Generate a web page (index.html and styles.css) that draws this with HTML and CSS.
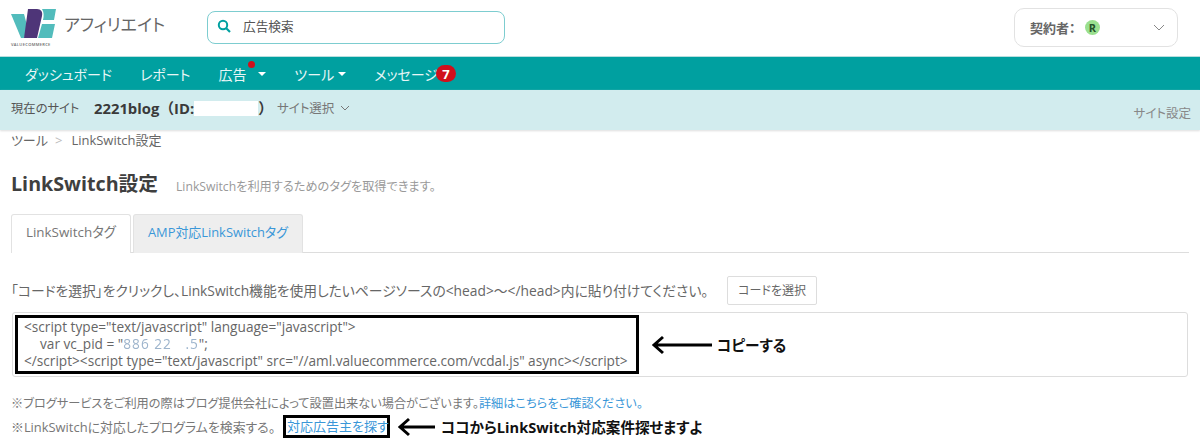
FILE: index.html
```html
<!DOCTYPE html>
<html lang="ja">
<head>
<meta charset="utf-8">
<title>LinkSwitch設定</title>
<link rel="stylesheet" href="styles.css">
</head>
<body>
<header class="top">
  <div class="logo">
    <div class="logo-mark">
      <svg class="logo-svg" width="45" height="30" viewBox="0 0 45 30">
        <path d="M0 5H13L17 20 13 29H10Z" fill="#52bcbc"/>
        <path d="M17 0H26C30 0 32 3 31 7L26 29H13Z" fill="#4e3578"/>
        <path d="M31 0H45L43 11H32C33 7 33 3 31 0ZM31 15H44L41 29H27Z" fill="#52bcbc"/>
      </svg>
      <span class="logo-word">VALUECOMMERCE</span>
    </div>
    <span class="logo-text">アフィリエイト</span>
  </div>
  <div class="search">
    <svg width="14" height="14" viewBox="0 0 14 14"><circle cx="6" cy="6" r="4.2" fill="none" stroke="#00a0a0" stroke-width="2"/><path d="M9 9l4 4" stroke="#00a0a0" stroke-width="2.2"/></svg>
    <span>広告検索</span>
  </div>
  <div class="account">
    <span class="acc-label">契約者：</span><span class="acc-badge">R</span>
    <svg class="acc-chev" width="12" height="7" viewBox="0 0 12 7"><path d="M1 1l5 5 5-5" fill="none" stroke="#888" stroke-width="1"/></svg>
  </div>
</header>
<nav class="nav">
  <a class="nav-item">ダッシュボード</a>
  <a class="nav-item">レポート</a>
  <a class="nav-item has-dot">広告<i class="dot"></i><i class="caret"></i></a>
  <a class="nav-item">ツール<i class="caret"></i></a>
  <a class="nav-item">メッセージ<b class="count">7</b></a>
</nav>
<div class="sitebar">
  <div class="site-left">
    <span class="site-label">現在のサイト</span>
    <strong class="site-name">2221blog（ID:<span class="mask"></span>）</strong>
    <span class="site-select">サイト選択</span>
    <svg width="10" height="6" viewBox="0 0 10 6"><path d="M1 1l4 4 4-4" fill="none" stroke="#777" stroke-width="1"/></svg>
  </div>
  <span class="site-config">サイト設定</span>
</div>
<main class="main">
  <div class="crumbs"><span>ツール</span><span class="sep">&gt;</span><span>LinkSwitch設定</span></div>
  <div class="title-row">
    <h1>LinkSwitch設定</h1>
    <span class="lead">LinkSwitchを利用するためのタグを取得できます。</span>
  </div>
  <div class="tabs">
    <div class="tab active">LinkSwitchタグ</div>
    <div class="tab">AMP対応LinkSwitchタグ</div>
  </div>
  <div class="instr">
    <span class="instr-text">「コードを選択」をクリックし、LinkSwitch機能を使用したいページソースの&lt;head&gt;～&lt;/head&gt;内に貼り付けてください。</span>
    <button class="btn">コードを選択</button>
  </div>
  <div class="codebox">
    <div class="code-mark">
      <div>&lt;script type="text/javascript" language="javascript"&gt;</div>
      <div class="indent">var vc_pid = "<span class="blur">886 22 &nbsp;&nbsp;.5</span>";</div>
      <div>&lt;/script&gt;&lt;script type="text/javascript" src="//aml.valuecommerce.com/vcdal.js" async&gt;&lt;/script&gt;</div>
    </div>
    <svg class="arrow" width="62" height="20" viewBox="0 0 62 20"><path d="M62 10H4M13 2L4 10l9 8" fill="none" stroke="#000" stroke-width="3"/></svg>
    <span class="note-strong">コピーする</span>
  </div>
  <p class="note">※ブログサービスをご利用の際はブログ提供会社によって設置出来ない場合がございます。<a class="link">詳細はこちらをご確認ください。</a></p>
  <div class="note note-row">
    <span class="note-left">※LinkSwitchに対応したプログラムを検索する。</span><a class="link boxed">対応広告主を探す</a>
    <svg class="arrow2" width="39" height="20" viewBox="0 0 39 20"><path d="M39 10H4M13 2L4 10l9 8" fill="none" stroke="#000" stroke-width="3"/></svg>
    <span class="note-strong second">ココからLinkSwitch対応案件探せますよ</span>
  </div>
</main>
</body>
</html>
```
FILE: styles.css
```css
* { box-sizing: border-box; }
html, body { margin: 0; padding: 0; }
body {
  width: 1200px; height: 448px; overflow: hidden; background: #fff; color: #555;
  font-family: "Open Sans", "Noto Sans CJK JP", sans-serif; font-size: 13px;
  font-feature-settings: "palt";
}
.top { height: 56px; display: flex; align-items: center; padding-left: 11px; position: relative; }
.logo { display: flex; width: 196px; align-items: flex-start; height: 38px; }
.logo-mark { width: 45px; display: flex; flex-direction: column; }
.logo-svg { display: block; }
.logo-word { font-size: 4px; line-height: 5px; margin-top: 3px; color: #666; white-space: nowrap; letter-spacing: .35px; font-weight: 600; }
.logo-text { font-size: 17px; line-height: 22px; color: #666; margin-left: 8px; margin-top: 5px; }
.search {
  width: 298px; height: 33px; border: 1px solid #7dcdd0; border-radius: 8px; display: flex; align-items: center;
  padding-left: 9px; gap: 12px; font-size: 12.7px; color: #555; margin-bottom: 2px; padding-bottom: 3px;
}
.account {
  margin-left: 509px; width: 164px; height: 39px; border: 1px solid #e2e2e2; border-radius: 10px;
  display: flex; align-items: center; padding-left: 15px; font-size: 13px; font-weight: 700; color: #666; margin-bottom: 2px;
}
.acc-label { width: 55px; }
.acc-badge {
  width: 15px; height: 15px; border-radius: 50%; background: #9ae08f; color: #24512a; font-size: 11px; font-weight: 700;
  display: flex; align-items: center; justify-content: center;
}
.acc-chev { margin-left: 53px; }
.nav { height: 34px; background: #00a0a0; display: flex; align-items: center; padding-left: 25px; gap: 28px; color: #e8f6f6; font-size: 14px; border-top: 1px solid #b8dede; }
.nav-item { display: flex; align-items: center; position: relative; }
.dot { position: absolute; left: 30px; top: -3px; width: 7px; height: 7px; border-radius: 50%; background: #d0101c; }
.caret { width: 0; height: 0; border: 4px solid transparent; border-top-color: #fff; border-bottom: 0; margin-left: 12px; }
.nav-item:nth-child(4) .caret { margin-left: 4px; }
.count {
  min-width: 20px; height: 17px; border-radius: 9px; background: #d0101c; color: #fff; font-size: 13px; font-weight: 700;
  display: flex; align-items: center; justify-content: center; margin-left: -2px;
}
.sitebar { height: 40px; background: #d2ecee; display: flex; justify-content: space-between; padding: 8px 9px 0 11px; box-shadow: 0 1px 2px #ddd; }
.site-left { display: flex; align-items: center; height: 19px; }
.site-label { font-size: 12.3px; width: 83px; }
.site-name { font-size: 14.8px; color: #3a3a3a; font-weight: 700; font-feature-settings: normal; }
.mask { display: inline-block; width: 64px; height: 15px; background: #fff; vertical-align: -2px; }
.site-select { font-size: 12.5px; color: #777; margin: 0 6px 0 4px; }
.site-config { font-size: 12.5px; color: #888; margin-top: 5px; }
.main { padding: 0 11px; }
.crumbs { display: flex; gap: 7px; font-size: 13px; line-height: 20px; color: #666; }
.sep { color: #bbb; margin-right: 2px; }
.title-row { display: flex; align-items: baseline; margin-top: 20px; height: 28px; }
h1 { margin: 0; font-size: 19.7px; font-weight: 700; color: #3f3f3f; line-height: 28px; }
.lead { font-size: 12.2px; color: #999; margin-left: 18px; }
.tabs { display: flex; gap: 2px; margin-top: 16px; border-bottom: 1px solid #ddd; height: 39px; width: 1178px; }
.tab { height: 39px; padding: 0 14px; border: 1px solid #e2e2e2; border-bottom: 0; border-radius: 3px 3px 0 0; background: #eee; color: #3a97d8; font-size: 12.9px; line-height: 34px; }
.tab.active { background: #fff; color: #777; height: 39px; font-size: 13.4px; }
.instr { display: flex; align-items: center; margin-top: 22px; height: 30px; font-size: 13.8px; color: #666; }
.instr-text { width: 716px; white-space: nowrap; }
.btn { width: 90px; height: 29px; background: #fff; border: 1px solid #ddd; border-radius: 2px; font: inherit; font-feature-settings: inherit; font-size: 12px; color: #666; padding: 0; }
.codebox {
  margin-top: 7px; width: 1176px; height: 65px; border: 1px solid #ddd; border-radius: 3px; margin-left: 1px;
  display: flex; align-items: center; padding-left: 2px;
}
.code-mark { width: 624px; height: 59px; border: 3px solid #000; padding: 0 0 0 6px; font-size: 13.65px; line-height: 17px; color: #666; white-space: nowrap; }
.indent { padding-left: 16px; }
.blur { color: #9db4cc; letter-spacing: 1px; filter: blur(.5px); }
.arrow { margin-left: 11px; }
.note-strong { color: #111; font-weight: 700; font-size: 14.7px; }
.note-strong.second { font-size: 14.6px; }
.codebox .note-strong { margin-left: 5px; }
.note { margin: 0; font-size: 12.2px; color: #777; }
p.note { margin-top: 18px; line-height: 17px; }
.note-row { display: flex; align-items: center; margin-top: 1px; height: 27px; }
.note-left { width: 272px; white-space: nowrap; font-size: 12.9px; }
.link { color: #3a97d8; }
.boxed { border: 3px solid #000; padding: 0 0 0 1px; font-size: 13px; height: 23px; line-height: 16px; width: 107px; white-space: nowrap; }
.arrow2 { margin: 0 6px 0 6px; }
```
